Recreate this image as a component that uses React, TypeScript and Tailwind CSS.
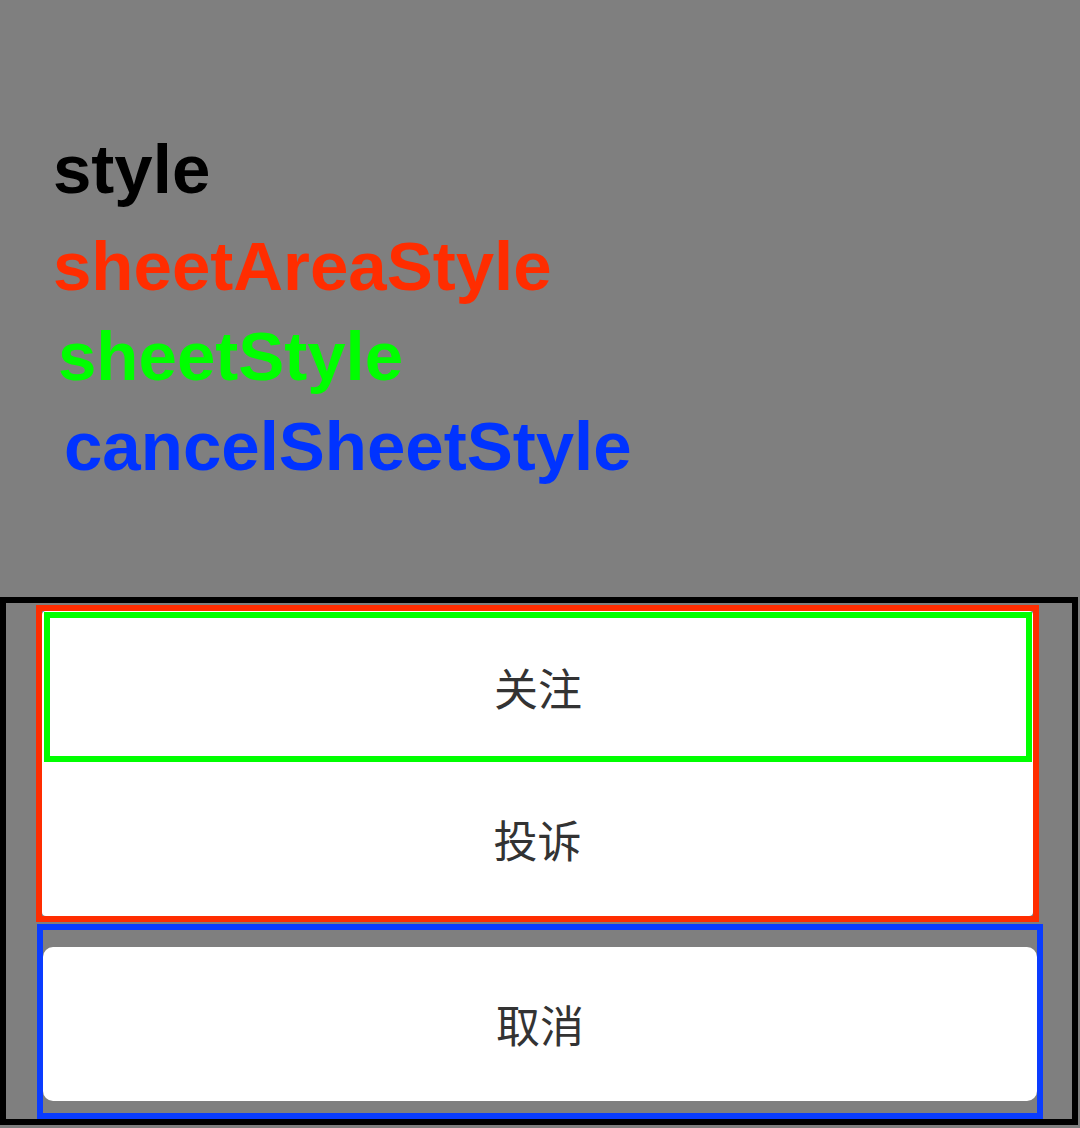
import React from "react"

const labels = [
	{ text: "style", color: "text-black", pad: "pl-[53px]", gap: "mb-[7px]" },
	{ text: "sheetAreaStyle", color: "text-[#ff2d00]", pad: "pl-[53px]", gap: "" },
	{ text: "sheetStyle", color: "text-[#00ff00]", pad: "pl-[58px]", gap: "" },
	{ text: "cancelSheetStyle", color: "text-[#0033ff]", pad: "pl-[64px]", gap: "" },
]

const cjk = "font-['Noto_Sans_CJK_SC',sans-serif] text-[44px] text-[#333333]"

export default function App() {
	return (
		<div className="w-[1080px] h-[1128px] bg-[#7f7f7f] flex flex-col overflow-hidden">
			{/* legend */}
			<div className="h-[597px] pt-[125px] font-['Liberation_Sans',Arial,sans-serif] font-bold text-[69px]">
				{labels.map((l) => (
					<div key={l.text} className={`h-[90px] leading-[90px] ${l.color} ${l.pad} ${l.gap}`}>
						{l.text}
					</div>
				))}
			</div>

			{/* action sheet */}
			<div className="w-[1078px] h-[528px] border-[6px] border-black flex flex-col">
				<div className="ml-[30px] mt-[2px] w-[1003px] h-[317px] border-[6px] border-[#ff2d00] flex flex-col">
					<div className="flex-1 bg-white rounded-[4px] flex flex-col">
						<div className="ml-[2px] mt-[1px] w-[988px] h-[150px] border-[6px] border-[#00ff00] flex items-center justify-center">
							<span className={cjk}>关注</span>
						</div>
						<div className="flex-1 flex items-center justify-center">
							<span className={cjk}>投诉</span>
						</div>
					</div>
				</div>
				<div className="ml-[31px] mt-[2px] w-[1006px] h-[195px] border-[6px] border-[#0a3cff] pt-[17px]">
					<div className="h-[154px] bg-white rounded-[10px] flex items-center justify-center">
						<span className={cjk}>取消</span>
					</div>
				</div>
			</div>
		</div>
	)
}
